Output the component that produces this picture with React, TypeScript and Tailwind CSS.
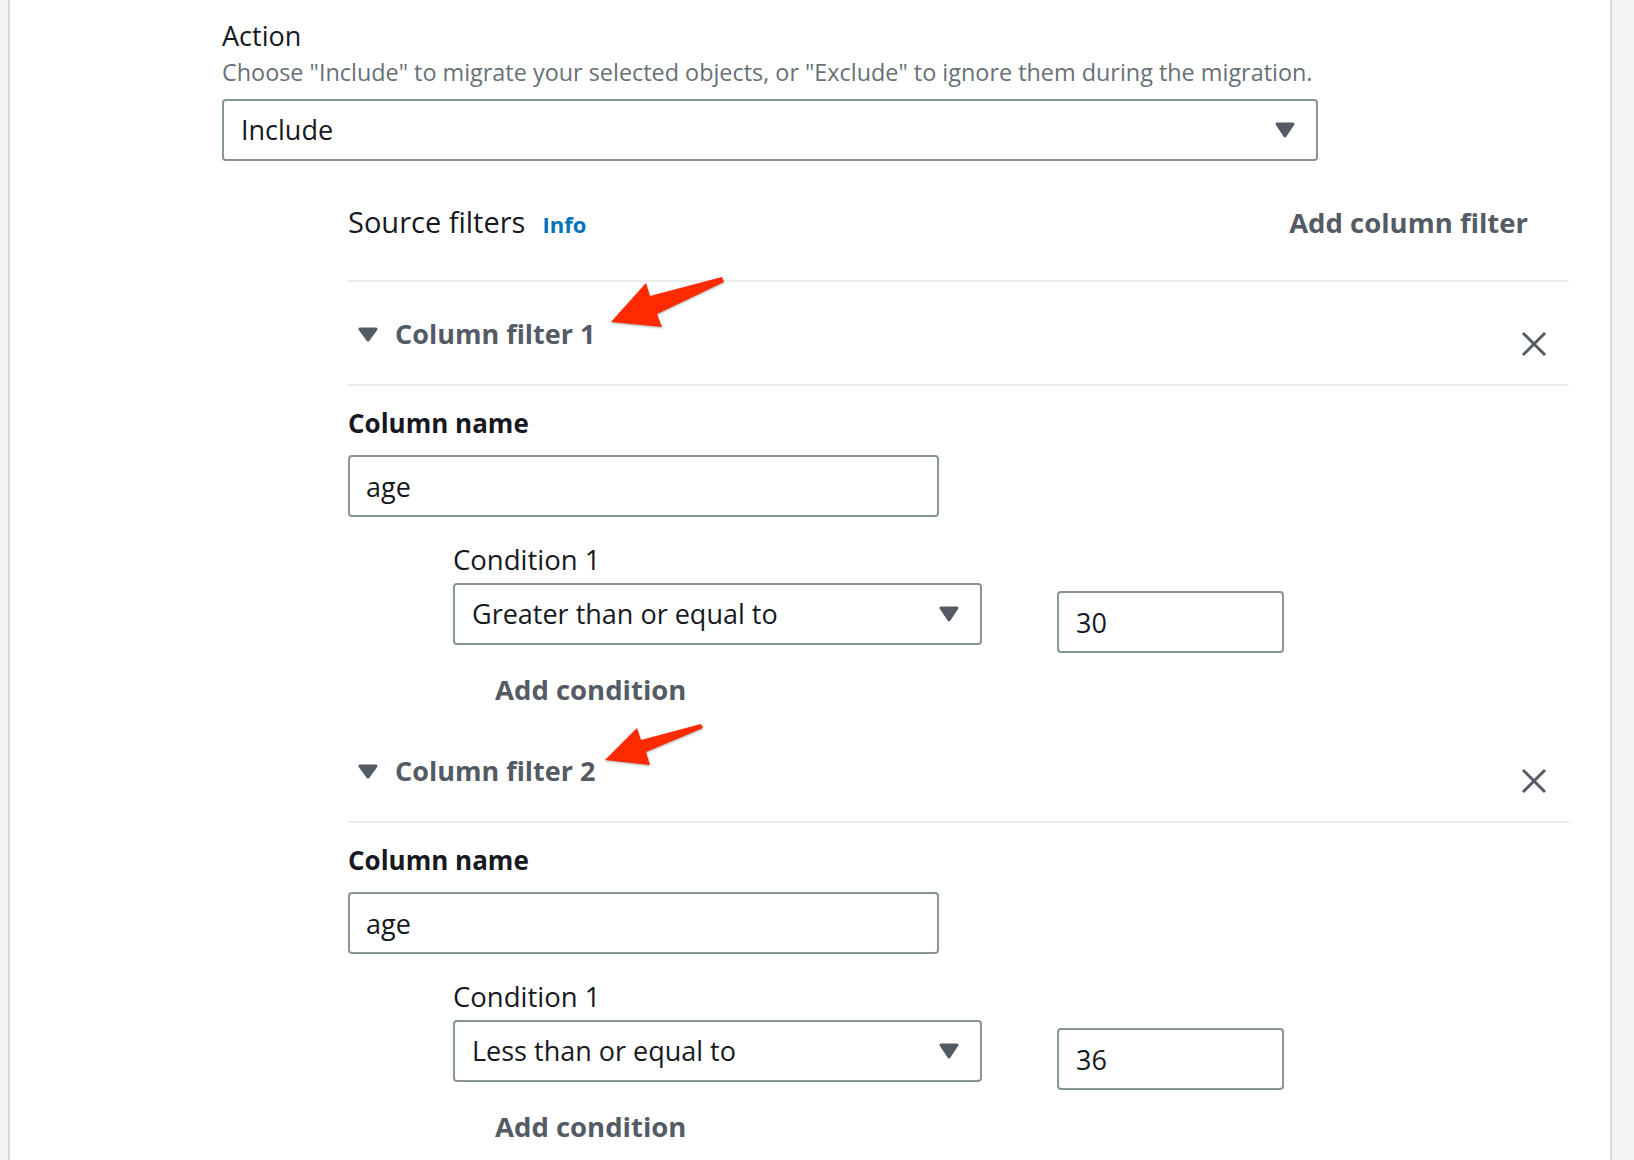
import React from 'react';

const filters = [
  { name: 'Column filter 1', column: 'age', condition: 'Greater than or equal to', value: '30' },
  { name: 'Column filter 2', column: 'age', condition: 'Less than or equal to', value: '36' },
];

function Caret({ className }: { className?: string }) {
  return (
    <svg className={className} width="20" height="16" viewBox="0 0 20 16">
      <polygon points="2,2 18,2 10,14" fill="#545b64" stroke="#545b64" strokeWidth="3" strokeLinejoin="round" />
    </svg>
  );
}

function ColumnFilter({ f }: { f: (typeof filters)[number] }) {
  return (
    <div className="mb-[12px]">
      <div className="flex h-[102px] items-start">
        <svg className="ml-[10px] mt-[45px]" width="20" height="15" viewBox="0 0 20 15">
          <polygon points="2,2 18,2 10,13" fill="#545b64" stroke="#545b64" strokeWidth="3" strokeLinejoin="round" />
        </svg>
        <div className="ml-[17px] mt-[34px] text-[27px] font-bold leading-[36px] text-[#545b64]">{f.name}</div>
        <svg className="ml-auto mr-[22px] mt-[49px]" width="26" height="26" viewBox="0 0 26 26">
          <path d="M2 2 L24 24 M24 2 L2 24" stroke="#545b64" strokeWidth="3" />
        </svg>
      </div>
      <div className="h-[2px] bg-[#eaeded]" />

      <div className="mt-[20px] text-[26px] font-bold leading-[34px] text-[#16191f]">Column name</div>
      <input
        readOnly
        value={f.column}
        className="mt-[15px] block h-[62px] w-[591px] rounded-[4px] border-2 border-[#879596] pl-[16px] text-[27px] text-[#16191f] outline-none"
      />

      <div className="ml-[105px] mt-[26px] flex items-start">
        <div className="w-[529px]">
          <div className="text-[27.5px] leading-[34px] text-[#16191f]">Condition 1</div>
          <div className="mt-[6px] flex h-[62px] items-center justify-between rounded-[4px] border-2 border-[#879596] pl-[17px] pr-[21px]">
            <span className="text-[27px] text-[#16191f]">{f.condition}</span>
            <Caret />
          </div>
        </div>
        <input
          readOnly
          value={f.value}
          className="ml-[75px] mt-[48px] block h-[62px] w-[227px] rounded-[4px] border-2 border-[#879596] pl-[17px] text-[27px] text-[#16191f] outline-none"
        />
      </div>

      <div className="ml-[147px] mt-[20px] text-[27.5px] font-bold leading-[34px] text-[#545b64]">Add condition</div>
    </div>
  );
}

export default function App() {
  return (
    <div className="relative flex min-h-screen bg-white font-['Open_Sans',sans-serif]">
      <div className="w-[10px] shrink-0 border-r-2 border-[#d5dbdb] bg-[#f2f3f3]" />

      <div className="flex-1 pl-[212px] pt-[18px]">
        <div className="text-[27px] leading-[36px] text-[#16191f]">Action</div>
        <div className="mt-[3px] text-[23.4px] leading-[30px] text-[#687078]">
          Choose "Include" to migrate your selected objects, or "Exclude" to ignore them during the migration.
        </div>
        <div className="mt-[12px] flex h-[62px] w-[1096px] items-center justify-between rounded-[4px] border-2 border-[#879596] pl-[17px] pr-[21px]">
          <span className="text-[27px] text-[#16191f]">Include</span>
          <Caret />
        </div>

        <div className="ml-[126px] mt-[43px] w-[1221px]">
          <div className="flex h-[36px] items-baseline justify-between pr-[41px]">
            <div className="flex items-baseline gap-[17px]">
              <span className="text-[29px] leading-[36px] text-[#16191f]">Source filters</span>
              <span className="text-[22px] font-bold text-[#0073bb]">Info</span>
            </div>
            <span className="text-[27.5px] font-bold leading-[36px] text-[#545b64]">Add column filter</span>
          </div>
          <div className="mt-[40px] h-[2px] bg-[#eaeded]" />

          {filters.map((f, i) => (
            <ColumnFilter key={i} f={f} />
          ))}
        </div>
      </div>

      <div className="w-[24px] shrink-0 border-l-2 border-[#d5dbdb] bg-[#f2f3f3]" />

      {/* annotation arrows */}
      <svg
        className="pointer-events-none absolute left-0 top-0 drop-shadow-[0_1px_1px_rgba(0,0,0,0.35)]"
        width="1634"
        height="1160"
      >
        <polygon points="611,322 646,283 650,296 722,277 724,282 657,314 662,327" fill="#ff2a00" />
        <polygon points="605,760 637,728 641,740 701,724 703,728 646,752 650,765" fill="#ff2a00" />
      </svg>
    </div>
  );
}
